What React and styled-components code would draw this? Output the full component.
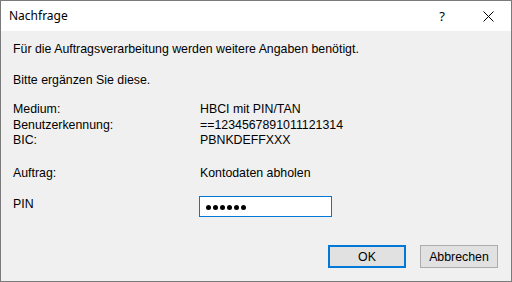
import React from "react";
import styled, { createGlobalStyle } from "styled-components";

const GlobalStyle = createGlobalStyle`
  html, body {
    margin: 0;
    padding: 0;
    background: #ffffff;
  }
`;

const rows = [
  { label: "Medium:", value: "HBCI mit PIN/TAN" },
  { label: "Benutzerkennung:", value: "==1234567891011121314" },
  { label: "BIC:", value: "PBNKDEFFXXX" },
];

function CloseIcon() {
  return (
    <svg width="11" height="11" viewBox="0 0 11 11">
      <path d="M0.5 0.5 L10.5 10.5 M10.5 0.5 L0.5 10.5" stroke="#000" strokeWidth="1" fill="none" />
    </svg>
  );
}

export default function App() {
  return (
    <>
      <GlobalStyle />
      <Window>
        <TitleBar>
          <Title>Nachfrage</Title>
          <TitleButtons>
            <TitleButton>?</TitleButton>
            <TitleButton>
              <CloseIcon />
            </TitleButton>
          </TitleButtons>
        </TitleBar>
        <Body>
          <Para>Für die Auftragsverarbeitung werden weitere Angaben benötigt.</Para>
          <Para>Bitte ergänzen Sie diese.</Para>
          <Block gap={18}>
            {rows.map((r) => (
              <Row key={r.label}>
                <Label>{r.label}</Label>
                <Value>{r.value}</Value>
              </Row>
            ))}
          </Block>
          <Block gap={12}>
            <Row>
              <Label>Auftrag:</Label>
              <Value>Kontodaten abholen</Value>
            </Row>
          </Block>
          <PinRow>
            <PinLabel>PIN</PinLabel>
            <PinInput>
              {[0, 1, 2, 3, 4, 5].map((i) => (
                <Dot key={i} />
              ))}
            </PinInput>
          </PinRow>
          <Buttons>
            <Button primary>OK</Button>
            <Button>Abbrechen</Button>
          </Buttons>
        </Body>
      </Window>
    </>
  );
}

const Window = styled.div`
  width: 512px;
  height: 282px;
  box-sizing: border-box;
  border: 1px solid #7a7a7a;
  display: flex;
  flex-direction: column;
  background: #f0f0f0;
  font-family: "Liberation Sans", Arial, sans-serif;
  color: #000;
`;

const TitleBar = styled.div`
  height: 30px;
  flex: none;
  background: #ffffff;
  display: flex;
  align-items: center;
  justify-content: space-between;
  padding-left: 8px;
`;

const Title = styled.div`
  font-family: "Noto Sans", "Open Sans", sans-serif;
  font-size: 12px;
  color: #000;
  margin-top: -1px;
`;

const TitleButtons = styled.div`
  display: flex;
  height: 100%;
`;

const TitleButton = styled.div`
  width: 46px;
  height: 100%;
  display: flex;
  align-items: center;
  justify-content: center;
  font-family: "Noto Sans", "Open Sans", sans-serif;
  font-size: 13px;
`;

const Body = styled.div`
  flex: 1;
  display: flex;
  flex-direction: column;
  padding: 10px 13px 0 12px;
  font-size: 12.35px;
`;

const Para = styled.div`
  line-height: 16px;
  margin-bottom: 15px;
`;

const Block = styled.div`
  margin-top: -1px;
  margin-bottom: ${({ gap }) => gap}px;
`;

const Row = styled.div`
  display: grid;
  grid-template-columns: 187px 1fr;
  line-height: 15.5px;
`;

const Label = styled.div``;

const Value = styled.div``;

const PinRow = styled.div`
  display: grid;
  grid-template-columns: 186px 133px;
  margin-top: 3px;
`;

const PinLabel = styled.div`
  line-height: 16px;
`;

const PinInput = styled.div`
  height: 21px;
  box-sizing: border-box;
  border: 1px solid #0078d7;
  background: #ffffff;
  display: flex;
  align-items: center;
  gap: 2px;
  padding: 2px 0 0 6px;
`;

const Dot = styled.span`
  width: 5px;
  height: 5px;
  border-radius: 50%;
  background: #000;
`;

const Buttons = styled.div`
  display: flex;
  justify-content: flex-end;
  gap: 14px;
  margin-top: 28px;
`;

const Button = styled.div`
  width: 78px;
  height: 23px;
  box-sizing: border-box;
  background: #e1e1e1;
  border: ${({ primary }) => (primary ? "2px solid #0078d7" : "1px solid #adadad")};
  display: flex;
  align-items: center;
  justify-content: center;
  font-size: 12.35px;
`;
